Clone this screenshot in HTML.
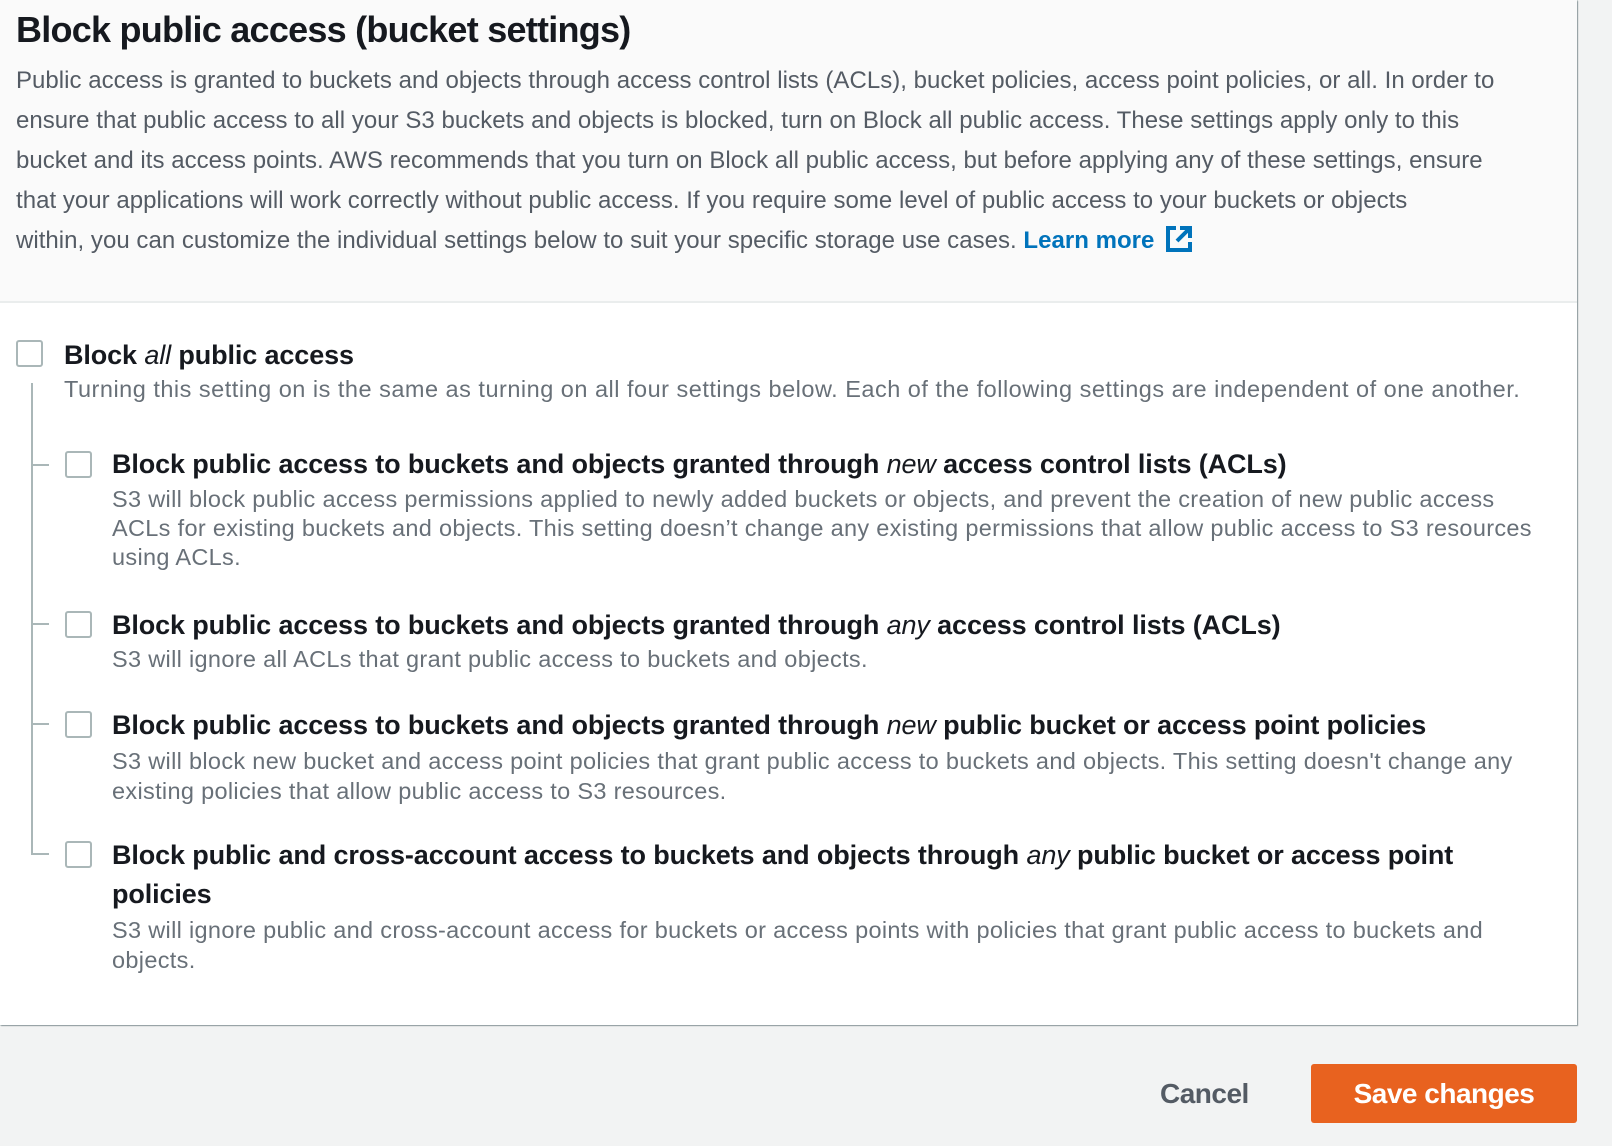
<!DOCTYPE html>
<html><head><meta charset="utf-8"><style>
*{margin:0;padding:0;box-sizing:border-box}
body{width:1612px;height:1146px;background:#f2f3f3;position:relative;overflow:hidden;font-family:"Liberation Sans",Arial,sans-serif}
.panel{position:absolute;left:0;top:0;width:1577px;height:1025px;background:#fff;box-shadow:1px 1px 1px rgba(0,28,36,.35),0 0 0 1px #d5dbdb}
.head{position:absolute;left:0;top:0;width:1577px;height:303px;background:#fafafa;border-bottom:2px solid #eaeded}
.t{position:absolute;white-space:nowrap}
h1{position:absolute;left:16px;top:10px;font-size:36px;line-height:40px;font-weight:bold;color:#16191f;letter-spacing:-0.75px}
.p{left:16px;top:61px;font-size:24px;line-height:40px;color:#545b64;letter-spacing:0.03px}
.p a{color:#0073bb;font-weight:bold;text-decoration:none}
.lab{font-size:27px;line-height:32px;font-weight:bold;color:#16191f;letter-spacing:-0.12px}
.desc{font-size:23.5px;line-height:29.5px;color:#687078;letter-spacing:0.32px}
.cb{position:absolute;width:27px;height:27px;border:2px solid #aab7b8;border-radius:3px;background:#fff}
.ln{position:absolute;background:#aab7b8}
</style></head><body>
<div class="panel">
<div class="head">
<h1>Block public access (bucket settings)</h1>
<div class="t p">Public access is granted to buckets and objects through access control lists (ACLs), bucket policies, access point policies, or all. In order to<br>ensure that public access to all your S3 buckets and objects is blocked, turn on Block all public access. These settings apply only to this<br>bucket and its access points. AWS recommends that you turn on Block all public access, but before applying any of these settings, ensure<br>that your applications will work correctly without public access. If you require some level of public access to your buckets or objects<br>within, you can customize the individual settings below to suit your specific storage use cases. <a>Learn more</a> <svg width="28" height="28" viewBox="0 0 28 28" style="vertical-align:-5px;margin-left:4px"><path d="M11 3H3v22h22v-8" fill="none" stroke="#0073bb" stroke-width="4"/><path d="M15 3h10v10M25 3L12 16" fill="none" stroke="#0073bb" stroke-width="4"/></svg></div>
</div>

<div class="cb" style="left:16px;top:340px"></div>
<div class="t lab" style="left:64px;top:339px">Block <i style="font-weight:normal">all</i> public access</div>
<div class="t desc" style="left:64px;top:375px;letter-spacing:0.5px">Turning this setting on is the same as turning on all four settings below. Each of the following settings are independent of one another.</div>

<div class="ln" style="left:31px;top:383px;width:2px;height:472px"></div>
<div class="ln" style="left:31px;top:464px;width:18px;height:2px"></div>
<div class="ln" style="left:31px;top:623px;width:18px;height:2px"></div>
<div class="ln" style="left:31px;top:723px;width:18px;height:2px"></div>
<div class="ln" style="left:31px;top:853px;width:18px;height:2px"></div>

<div class="cb" style="left:65px;top:451px"></div>
<div class="t lab" style="left:112px;top:448px">Block public access to buckets and objects granted through <i style="font-weight:normal">new</i> access control lists (ACLs)</div>
<div class="t desc" style="left:112px;top:485px;line-height:29px">S3 will block public access permissions applied to newly added buckets or objects, and prevent the creation of new public access<br>ACLs for existing buckets and objects. This setting doesn’t change any existing permissions that allow public access to S3 resources<br>using ACLs.</div>

<div class="cb" style="left:65px;top:611px"></div>
<div class="t lab" style="left:112px;top:609px">Block public access to buckets and objects granted through <i style="font-weight:normal">any</i> access control lists (ACLs)</div>
<div class="t desc" style="left:112px;top:645px">S3 will ignore all ACLs that grant public access to buckets and objects.</div>

<div class="cb" style="left:65px;top:711px"></div>
<div class="t lab" style="left:112px;top:709px">Block public access to buckets and objects granted through <i style="font-weight:normal">new</i> public bucket or access point policies</div>
<div class="t desc" style="left:112px;top:746px;line-height:30px">S3 will block new bucket and access point policies that grant public access to buckets and objects. This setting doesn't change any<br>existing policies that allow public access to S3 resources.</div>

<div class="cb" style="left:65px;top:841px"></div>
<div class="t lab" style="left:112px;top:836px;line-height:39px">Block public and cross-account access to buckets and objects through <i style="font-weight:normal">any</i> public bucket or access point<br>policies</div>
<div class="t desc" style="left:112px;top:916px">S3 will ignore public and cross-account access for buckets or access points with policies that grant public access to buckets and<br>objects.</div>
</div>

<div class="t" style="left:1160px;top:1078px;font-size:28px;line-height:32px;font-weight:bold;color:#545b64;letter-spacing:-0.5px">Cancel</div>
<div style="position:absolute;left:1311px;top:1064px;width:266px;height:59px;background:#e8621f;border-radius:3px;color:#fff;font-weight:bold;font-size:28px;line-height:59px;text-align:center;letter-spacing:-0.5px">Save changes</div>
</body></html>
